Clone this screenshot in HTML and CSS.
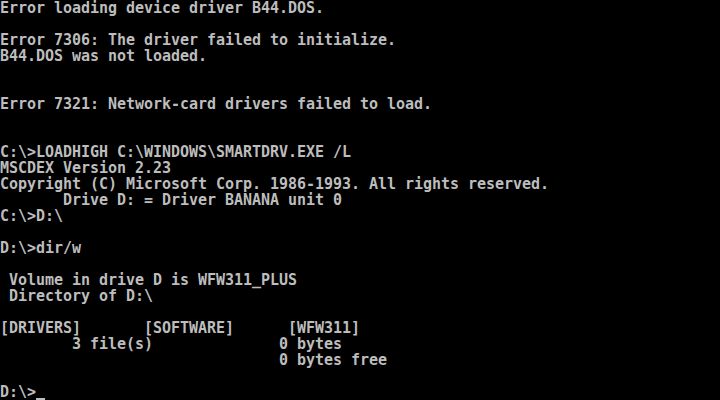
FILE: index.html
```html
<!DOCTYPE html>
<html lang="en">
<head>
    <meta charset="UTF-8">
    <meta name="viewport" content="width=device-width, initial-scale=1.0">
    <title>MS-DOS</title>
    <link rel="stylesheet" href="styles.css">
</head>
<body>
<pre class="screen">Error loading device driver B44.DOS.

Error 7306: The driver failed to initialize.
B44.DOS was not loaded.


Error 7321: Network-card drivers failed to load.


C:\>LOADHIGH C:\WINDOWS\SMARTDRV.EXE /L
MSCDEX Version 2.23
Copyright (C) Microsoft Corp. 1986-1993. All rights reserved.
       Drive D: = Driver BANANA unit 0
C:\>D:\

D:\>dir/w

 Volume in drive D is WFW311_PLUS
 Directory of D:\

[DRIVERS]       [SOFTWARE]      [WFW311]
        3 file(s)              0 bytes
                               0 bytes free

D:\><span class="cursor"></span></pre>
</body>
</html>
```
FILE: styles.css
```css
html, body {
    margin: 0;
    padding: 0;
    background-color: #000;
}
body {
    width: 720px;
    height: 400px;
    overflow: hidden;
}
.screen {
    margin: 0;
    padding: 0;
    font-family: "DejaVu Sans Mono", "Liberation Mono", monospace;
    font-size: 15px;
    font-weight: bold;
    letter-spacing: -0.03px;
    line-height: 16px;
    color: #bdbdbd;
    white-space: pre;
}
.cursor {
    display: inline-block;
    width: 9px;
    height: 2px;
    background-color: #bdbdbd;
    vertical-align: -3px;
}
```
